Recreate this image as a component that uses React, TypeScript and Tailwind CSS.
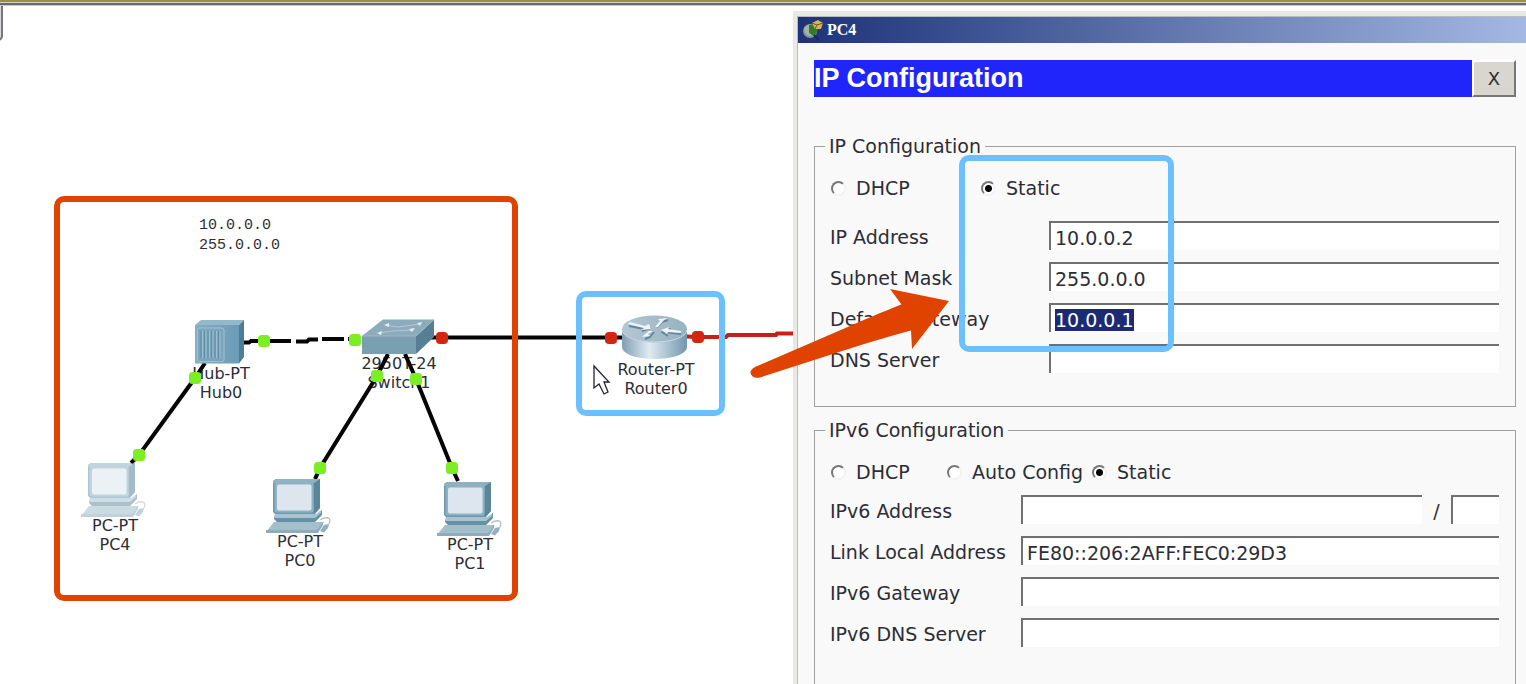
import { useEffect, useRef } from "react";
import type { ReactNode, Ref } from "react";

const deviceLabels = [
  { id: "hub", place: "left-[221px] top-[358px]", model: "Hub-PT", name: "Hub0" },
  { id: "switch", place: "left-[399px] top-[348px]", model: "2950T-24", name: "Switch1" },
  { id: "router", place: "left-[656px] top-[354px]", model: "Router-PT", name: "Router0" },
  { id: "pc4", place: "left-[115px] top-[510px]", model: "PC-PT", name: "PC4" },
  { id: "pc0", place: "left-[300px] top-[526px]", model: "PC-PT", name: "PC0" },
  { id: "pc1", place: "left-[470px] top-[529px]", model: "PC-PT", name: "PC1" },
];

const upPorts = [
  [264, 341],
  [355, 340],
  [195, 378],
  [139, 455],
  [377, 376],
  [416, 379],
  [320, 468],
  [452, 468],
];

const downPorts = [
  [442, 338],
  [611, 338],
  [698, 337],
];

function Pc({ x, y, faded = false }: { x: number; y: number; faded?: boolean }) {
  return (
    <g transform={`translate(${x} ${y})`} opacity={faded ? 0.55 : 1}>
      <path d="M47 41q5-3 8-2t1 6" fill="none" stroke="#b5c2c9" strokeWidth="1.4" />
      <path d="M2 35 44 35 49 31 49 36 42 43H4L1 40Z" fill="#6690a5" />
      <path d="M2 35H43L48 32 48 34 42 39H2Z" fill="#a9c4d1" />
      <path d="M1 43H51L45 53H-7Z" fill="#a4bfcc" />
      <path d="M-7 51H44L50 43V46L45 54H-7Z" fill="#8eacbb" />
      <path d="M0 2 3 0H47V29L42 35H2L0 33Z" fill="#6f98ab" />
      <path d="M0 2 3 0H47L42 4H0Z" fill="#8fb1c0" />
      <path d="M41 4 47 0V29L41 35Z" fill="#5a869a" />
      <rect x="1.5" y="3.5" width="39" height="30" rx="2" fill="#8eb2c3" />
      <rect x="4" y="5.5" width="34.5" height="26" rx="2" fill="#dde6ee" />
      <path d="M47 52 51 46 56 45 55 49 51 53.500Z" fill="#93afbd" />
    </g>
  );
}

function Network() {
  return (
    <svg className="absolute top-0 left-0" width="793" height="678" viewBox="0 6 793 678" aria-hidden="true">
      <defs>
        <linearGradient id="hubFace" x1="0" x2="1">
          <stop offset="0" stopColor="#86aec4" />
          <stop offset="1" stopColor="#6c9bb5" />
        </linearGradient>
        <linearGradient id="routerSide" x1="0" x2="1">
          <stop offset="0" stopColor="#7f9fb4" />
          <stop offset="0.42" stopColor="#e0ebf3" />
          <stop offset="1" stopColor="#7396ad" />
        </linearGradient>
        <linearGradient id="routerTop" x1="0" x2="1">
          <stop offset="0" stopColor="#b4c7d3" />
          <stop offset="1" stopColor="#98b2c0" />
        </linearGradient>
      </defs>

      <path d="M0 6H1.500V38L0 40Z" fill="#d9d9db" />
      <path d="M2 6V37L0 40" fill="none" stroke="#77777b" strokeWidth="2" />

      <g fill="none" stroke="#050505" strokeWidth="4">
        <path d="M205 363 195 378 139 455 131 463" />
        <path d="M388 354 377 376 320 468 315 479" />
        <path d="M405 354 416 379 452 468 458 481" />
        <path d="M244 342.500H249L251 341H291M296 341.500H307L309 339.500H318M322 339H344M348 339H355" />
        <path d="M431 337.500H624" />
      </g>
      <path d="M686 336.500 698 337H726L728 335H776L777 333.500H793" fill="none" stroke="#c62018" strokeWidth="4" />

      <g>
        <path d="M195 325 201 320H244L239 325Z" fill="#93b8c9" />
        <path d="M195 325H239V363.500H195Z" fill="url(#hubFace)" />
        <path d="M239 325 244 320V357L239 363.500Z" fill="#4c7e99" />
        <rect x="197.500" y="328" width="26.5" height="33.5" rx="2" fill="#7ba5bc" stroke="#a1c1d0" />
        <path d="M201 331V358M204.500 331V358M208 331V358M211.500 331V358M215 331V358M218.500 331V358" stroke="#5f8da7" strokeWidth="1" />
        <path d="M202.500 331V358M206 331V358M209.500 331V358M213 331V358M216.500 331V358M220 331V358" stroke="#9ebfce" strokeWidth="1" />
      </g>

      <g>
        <path d="M362 336 383 319.500H434L416 336Z" fill="#8cacbb" />
        <path d="M362 336H416V354H362Z" fill="#7a9fb1" />
        <path d="M416 336 434 319.500V337L416 354Z" fill="#567f94" />
        <path d="M362 336H416L434 319.500" fill="none" stroke="#9db9c6" />
        <g fill="none" stroke="#b2c8d3" strokeWidth="1.2">
          <path d="M388 325.500 398 327 420 324" />
          <path d="M380 333 392 331 413 330" />
        </g>
        <g fill="#e7f0f5">
          <path d="M384 325 389 323 389 327Z" />
          <path d="M417 323 422 322 420 326Z" />
          <path d="M377 333 382 331 381 335Z" />
          <path d="M409 329 415 328 412 332Z" />
        </g>
      </g>

      <g>
        <path d="M622 329V347C623 363 686 363 687 347V329Z" fill="url(#routerSide)" />
        <ellipse cx="654.5" cy="329" rx="32.5" ry="13.5" fill="url(#routerTop)" />
        <path d="M622 330C624 346 685 346 687 330" fill="none" stroke="#c8d8e2" />
        <g fill="none" stroke="#66859a" strokeWidth="2" strokeLinejoin="round">
          <path d="M629 326 644 329M642 331 651 328" />
          <path d="M681 334 664 332M671 329 662 332 668 336" />
          <path d="M657 327 662 322 668 320" />
          <path d="M654 332 650 337 645 339" />
        </g>
        <g fill="#eef5f9">
          <path d="M628 324 630 322 645 326 649 324 651 329 641 330 644 328Z" />
          <path d="M681 333 681 331 668 329 669 327 661 330 667 334 668 332Z" />
          <path d="M655 327 660 321 658 319 668 318 664 320 658 327Z" />
          <path d="M653 331 648 334 650 336 642 337 644 335 649 331Z" />
        </g>
      </g>

      <Pc x={88} y={463} faded />
      <Pc x={273} y={479} />
      <Pc x={444} y={482} />

      {upPorts.map(([x, y]) => (
        <rect key={`${x}-${y}`} x={x - 6} y={y - 6} width="12" height="12" rx="3.500" fill="#7cee25" />
      ))}
      {downPorts.map(([x, y]) => (
        <rect key={`${x}-${y}`} x={x - 6} y={y - 6} width="12" height="12" rx="4" fill="#d3250f" />
      ))}

      <path
        d="M594 366V388L599 384 604 394 608 392 604 382H609Z"
        fill="#ffffff"
        stroke="#222230"
        strokeWidth="1.300"
      />
    </svg>
  );
}

function Radio({ name, label, checked = false, className = "" }: { name: string; label: string; checked?: boolean; className?: string }) {
  return (
    <label className={`flex h-6 items-center gap-[10px] whitespace-nowrap ${className}`}>
      <input
        type="radio"
        name={name}
        defaultChecked={checked}
        className="size-[15px] shrink-0 appearance-none rounded-full border-2 border-t-[#777777] border-r-[#f2f2f2] border-b-[#f2f2f2] border-l-[#777777] bg-white checked:bg-[radial-gradient(circle,#000_0,#000_3px,#fff_4px)]"
      />
      {label}
    </label>
  );
}

function Box({ id, value = "", boxRef, label, className = "flex-1" }: { id: string; value?: string; boxRef?: Ref<HTMLInputElement>; label?: string; className?: string }) {
  return (
    <input
      id={id}
      ref={boxRef}
      type="text"
      aria-label={label}
      defaultValue={value}
      className={`h-[29px] min-w-0 border-t-2 border-l-2 border-[#707070] bg-white pt-[2px] pl-1 caret-transparent outline-none selection:bg-[#1b2a72] selection:text-white ${className}`}
    />
  );
}

function Row({ id, label, labelWidth, children }: { id: string; label: string; labelWidth: string; children: ReactNode }) {
  return (
    <div className="flex h-[29px] items-center">
      <label htmlFor={id} className={`shrink-0 pt-1 whitespace-nowrap ${labelWidth}`}>
        {label}
      </label>
      {children}
    </div>
  );
}

function AppIcon() {
  return (
    <svg width="22" height="22" viewBox="0 0 22 22" aria-hidden="true">
      <circle cx="8" cy="12" r="7" fill="#7f9690" />
      <path d="M2 10Q5 4 11 6L8 11 10 17Q3 18 2 10Z" fill="#a3b3a8" />
      <path d="M7 6 14 5 16 11 12 17 7 14Z" fill="#357a2b" />
      <path d="M10 4 16 1 21 4 19 10 13 10Z" fill="#d5b653" />
      <path d="M10 4 15 6 21 4M15 6 13 10" fill="none" stroke="#705a20" />
      <path d="M12 16 17 21" stroke="#1b2858" strokeWidth="2" />
    </svg>
  );
}

function ConfigWindow() {
  const gateway = useRef<HTMLInputElement>(null);
  useEffect(() => {
    gateway.current?.focus();
    gateway.current?.select();
  }, []);

  return (
    <section className="mt-[5px] flex min-w-0 flex-1 flex-col border-t-[5px] border-l-4 border-[#e8e8e4]">
      <div className="flex flex-1 flex-col border-t border-l border-[#b9bbc0] bg-[#f9f9f9]">
        <header className="flex h-[26px] items-center gap-[3px] bg-linear-to-r from-[#1f3278] via-[#6075ac] to-[#a5b8e3] pl-1">
          <AppIcon />
          <h1 className="font-['Liberation_Serif',serif] text-base font-bold text-white">PC4</h1>
        </header>
        <div className="flex flex-1 flex-col pt-[17px] pr-[10px] pl-4">
          <div className="flex h-[37px] bg-[#2026fb]">
            <h2 className="flex-1 font-['Liberation_Sans',sans-serif] text-[27px] leading-[37px] font-bold text-white">IP Configuration</h2>
            <button
              type="button"
              className="w-[44px] border-2 border-t-white border-r-[#777777] border-b-[#777777] border-l-white bg-[#d8d6cf] text-lg leading-none"
            >
              X
            </button>
          </div>

          <fieldset className="mt-[37px] min-w-0 border border-[#a0a0a0] pt-[18px] pr-4 pb-[33px] pl-[15px]">
            <legend className="-ml-[5px] px-1 leading-6">IP Configuration</legend>
            <div className="flex pl-px">
              <Radio name="ipv4" label="DHCP" className="w-[150px]" />
              <Radio name="ipv4" label="Static" checked />
            </div>
            <div className="mt-[21px] flex flex-col gap-3">
              <Row id="ip" label="IP Address" labelWidth="w-[219px]">
                <Box id="ip" value="10.0.0.2" />
              </Row>
              <Row id="mask" label="Subnet Mask" labelWidth="w-[219px]">
                <Box id="mask" value="255.0.0.0" />
              </Row>
              <Row id="gateway" label="Default Gateway" labelWidth="w-[219px]">
                <Box id="gateway" value="10.0.0.1" boxRef={gateway} />
              </Row>
              <Row id="dns" label="DNS Server" labelWidth="w-[219px]">
                <Box id="dns" />
              </Row>
            </div>
          </fieldset>

          <fieldset className="mt-[11px] min-w-0 flex-1 border border-b-0 border-[#a0a0a0] pt-[18px] pr-4 pl-[15px]">
            <legend className="-ml-[5px] px-1 leading-6">IPv6 Configuration</legend>
            <div className="flex pl-px">
              <Radio name="ipv6" label="DHCP" className="w-[116px]" />
              <Radio name="ipv6" label="Auto Config" className="w-[145px]" />
              <Radio name="ipv6" label="Static" checked />
            </div>
            <div className="mt-[11px] flex flex-col gap-3">
              <Row id="ip6" label="IPv6 Address" labelWidth="w-[191px]">
                <Box id="ip6" />
                <span className="w-[29px] pt-1 text-center">/</span>
                <Box id="prefix" label="Prefix length" className="w-12" />
              </Row>
              <Row id="link" label="Link Local Address" labelWidth="w-[191px]">
                <Box id="link" value="FE80::206:2AFF:FEC0:29D3" />
              </Row>
              <Row id="gateway6" label="IPv6 Gateway" labelWidth="w-[191px]">
                <Box id="gateway6" />
              </Row>
              <Row id="dns6" label="IPv6 DNS Server" labelWidth="w-[191px]">
                <Box id="dns6" />
              </Row>
            </div>
          </fieldset>
        </div>
      </div>
    </section>
  );
}

export default function App() {
  return (
    <div className="relative flex h-screen flex-col overflow-hidden bg-white font-['DejaVu_Sans',Verdana,sans-serif] text-[19px] text-[#2d2d35]">
      <div className="h-[6px] shrink-0 border-t-2 border-b border-t-[#998d50] border-b-[#c8c8cc] bg-[#6b6a72]">
        <div className="h-px bg-[#d8d3c0]" />
      </div>
      <main className="flex min-h-0 flex-1">
        <section className="relative w-[793px] shrink-0" aria-label="Network topology">
          <p className="absolute top-[210px] left-[199px] font-['Liberation_Mono',monospace] text-[15px] leading-5 whitespace-pre">
            {"10.0.0.0\n255.0.0.0"}
          </p>
          {deviceLabels.map((d) => (
            <p key={d.id} className={`absolute -translate-x-1/2 text-center text-base leading-[19px] whitespace-nowrap ${d.place}`}>
              {d.model}
              <br />
              {d.name}
            </p>
          ))}
          <Network />
        </section>
        <ConfigWindow />
      </main>

      <div className="pointer-events-none absolute top-[196px] left-[54px] h-[405px] w-[464px] rounded-[10px] border-6 border-[#e04300]" />
      <div className="pointer-events-none absolute top-[291px] left-[576px] h-[125px] w-[149px] rounded-[10px] border-6 border-[#6cc0ff]" />
      <div className="pointer-events-none absolute top-[155px] left-[959px] h-[197px] w-[215px] rounded-[10px] border-6 border-[#6cc0ff]" />
      <svg className="pointer-events-none absolute top-[285px] left-[745px]" width="210" height="100" viewBox="745 285 210 100" aria-hidden="true">
        <path
          d="M949 301 890 289 901.500 304.500C890 309 870 317 850 326L755 367Q750 370 750.500 373Q752 379 760 377.500L850 348.500C870 342 890 336 911 330.500L912 349Z"
          fill="#e04300"
        />
      </svg>
    </div>
  );
}
